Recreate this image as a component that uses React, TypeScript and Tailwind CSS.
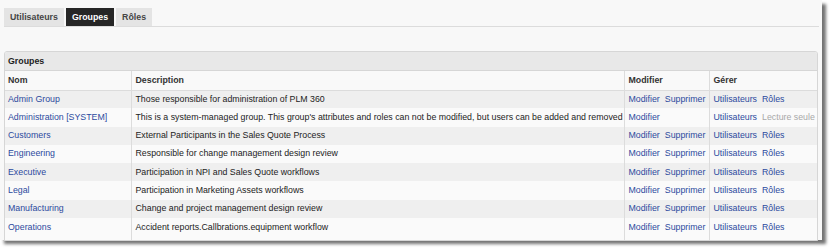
import React from 'react';

type Row = { name: string; desc: string; canDelete: boolean; readOnly: boolean };

const rows: Row[] = [
  { name: 'Admin Group', desc: 'Those responsible for administration of PLM 360', canDelete: true, readOnly: false },
  { name: 'Administration [SYSTEM]', desc: "This is a system-managed group. This group's attributes and roles can not be modified, but users can be added and removed", canDelete: false, readOnly: true },
  { name: 'Customers', desc: 'External Participants in the Sales Quote Process', canDelete: true, readOnly: false },
  { name: 'Engineering', desc: 'Responsible for change management design review', canDelete: true, readOnly: false },
  { name: 'Executive', desc: 'Participation in NPI and Sales Quote workflows', canDelete: true, readOnly: false },
  { name: 'Legal', desc: 'Participation in Marketing Assets workflows', canDelete: true, readOnly: false },
  { name: 'Manufacturing', desc: 'Change and project management design review', canDelete: true, readOnly: false },
  { name: 'Operations', desc: 'Accident reports.Callbrations.equipment workflow', canDelete: true, readOnly: false },
];

const tabs = ['Utilisateurs', 'Groupes', 'Rôles'];

export default function App() {
  return (
    <div className="w-[835px] h-[251px] bg-white text-[8.8px] text-[#222] [font-family:'Liberation_Sans',Arial,sans-serif]">
      <div className="w-[822px] h-[240px] bg-[#f8f8f8] shadow-[4px_4px_3px_rgba(0,0,0,0.55)] pt-[8px] px-[4px]">
        {/* tabs */}
        <div className="flex gap-[2px] border-b border-[#dcdcdc] h-[19px] mr-[-1px]">
          {tabs.map((t) => (
            <div
              key={t}
              className={`px-[6px] h-[18px] leading-[18px] font-bold ${t === 'Groupes' ? 'bg-[#262626] text-white' : 'bg-[#e4e4e4] text-[#444]'}`}
            >
              {t}
            </div>
          ))}
        </div>

        {/* panel */}
        <div className="mt-[24px] border border-[#d6d6d6] rounded-t-[3px] bg-[#fafafa] overflow-hidden h-[190px]">
          <div className="h-[19px] leading-[19px] bg-[#e8e8e8] px-[3px] font-bold border-b border-[#d6d6d6]">Groupes</div>
          <table className="w-full border-collapse table-fixed">
            <colgroup>
              <col className="w-[126px]" />
              <col className="w-[493px]" />
              <col className="w-[85px]" />
              <col />
            </colgroup>
            <thead>
              <tr className="h-[19px] bg-[#f9f9f9] text-left font-bold text-[#333]">
                <th className="px-[3px] font-bold border-b border-[#dcdcdc]">Nom</th>
                <th className="px-[4px] font-bold border-l border-b border-[#dcdcdc]">Description</th>
                <th className="px-[4px] font-bold border-l border-b border-[#dcdcdc]">Modifier</th>
                <th className="px-[4px] font-bold border-l border-b border-[#dcdcdc]">Gérer</th>
              </tr>
            </thead>
            <tbody>
              {rows.map((r, i) => (
                <tr key={r.name} className={`h-[18.3px] ${i % 2 === 0 ? 'bg-[#efefef]' : 'bg-[#fafafa]'}`}>
                  <td className="px-[3px] text-[#2c4a9e] whitespace-nowrap">{r.name}</td>
                  <td className="px-[4px] border-l border-[#dcdcdc] whitespace-nowrap">{r.desc}</td>
                  <td className="px-[4px] border-l border-[#dcdcdc] text-[#2c4a9e] whitespace-nowrap">
                    <span>Modifier</span>
                    {r.canDelete && <span className="ml-[5px]">Supprimer</span>}
                  </td>
                  <td className="px-[4px] border-l border-[#dcdcdc] whitespace-nowrap">
                    <span className="text-[#2c4a9e]">Utilisateurs</span>
                    {r.readOnly ? (
                      <span className="ml-[5px] text-[#a8a8a8]">Lecture seule</span>
                    ) : (
                      <span className="ml-[5px] text-[#2c4a9e]">Rôles</span>
                    )}
                  </td>
                </tr>
              ))}
              <tr className="h-[4px] bg-[#fafafa]">
                <td />
                <td className="border-l border-[#dcdcdc]" />
                <td className="border-l border-[#dcdcdc]" />
                <td className="border-l border-[#dcdcdc]" />
              </tr>
            </tbody>
          </table>
        </div>
      </div>
    </div>
  );
}
